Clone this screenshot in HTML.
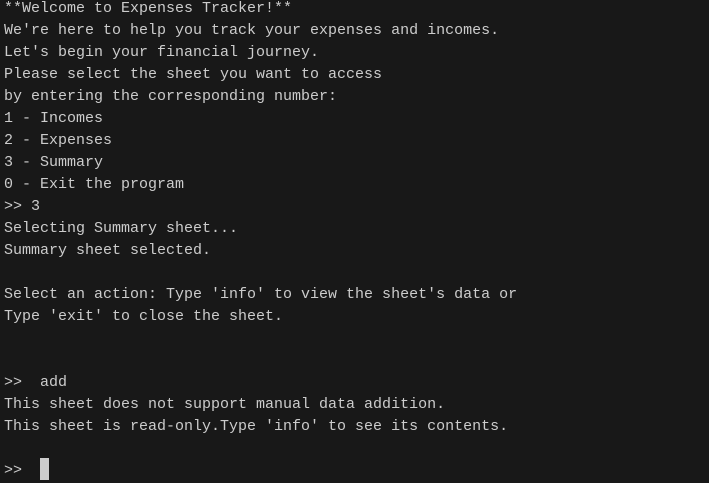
<html><head><style>
body{margin:0;background:#181818;width:709px;height:483px;overflow:hidden}
pre{margin:0;position:absolute;left:4px;top:-2px;font:15px/22px "Liberation Mono",monospace;color:#cccccc}
.c{position:absolute;left:40px;top:458px;width:9px;height:22px;background:#cccccc}
</style></head><body><pre>**Welcome to Expenses Tracker!**
We're here to help you track your expenses and incomes.
Let's begin your financial journey.
Please select the sheet you want to access
by entering the corresponding number:
1 - Incomes
2 - Expenses
3 - Summary
0 - Exit the program
>> 3
Selecting Summary sheet...
Summary sheet selected.

Select an action: Type 'info' to view the sheet's data or
Type 'exit' to close the sheet.


>>  add
This sheet does not support manual data addition.
This sheet is read-only.Type 'info' to see its contents.

>> </pre><div class="c"></div></body></html>
